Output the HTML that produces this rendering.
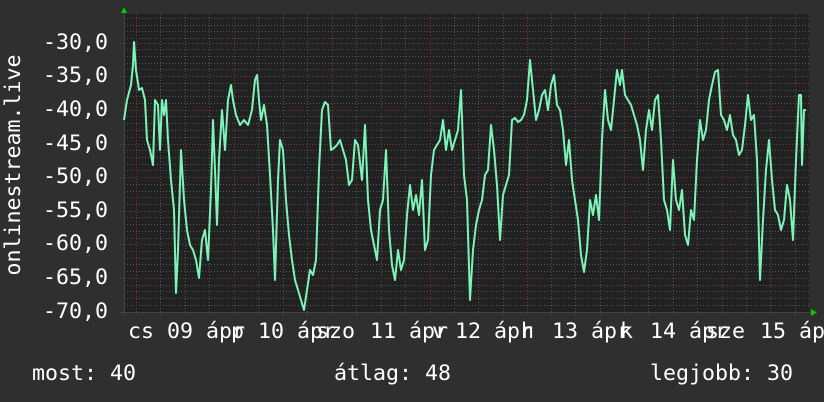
<!DOCTYPE html>
<html><head><meta charset="utf-8"><style>
html,body{margin:0;padding:0;background:#2f2f2f;width:824px;height:402px;overflow:hidden}
.t{position:absolute;color:#fff;font-family:"DejaVu Sans Mono","Liberation Mono",monospace;font-size:21.6px;line-height:1;white-space:pre}
.y{right:716px;text-align:right}
</style></head><body>
<svg width="824" height="402" style="position:absolute;left:0;top:0">
<rect x="124" y="14" width="685" height="298" fill="#212121"/>
<g stroke="#555" stroke-width="1" stroke-dasharray="1,2">
<line x1="124" x2="809" y1="18.5" y2="18.5"/><line x1="124" x2="809" y1="25.5" y2="25.5"/><line x1="124" x2="809" y1="31.5" y2="31.5"/><line x1="124" x2="809" y1="38.5" y2="38.5"/>
<line x1="124" x2="809" y1="49.5" y2="49.5"/><line x1="124" x2="809" y1="56.5" y2="56.5"/><line x1="124" x2="809" y1="63.5" y2="63.5"/><line x1="124" x2="809" y1="69.5" y2="69.5"/>
<line x1="124" x2="809" y1="83.5" y2="83.5"/><line x1="124" x2="809" y1="90.5" y2="90.5"/><line x1="124" x2="809" y1="96.5" y2="96.5"/><line x1="124" x2="809" y1="103.5" y2="103.5"/>
<line x1="124" x2="809" y1="116.5" y2="116.5"/><line x1="124" x2="809" y1="123.5" y2="123.5"/><line x1="124" x2="809" y1="130.5" y2="130.5"/><line x1="124" x2="809" y1="137.5" y2="137.5"/>
<line x1="124" x2="809" y1="150.5" y2="150.5"/><line x1="124" x2="809" y1="157.5" y2="157.5"/><line x1="124" x2="809" y1="164.5" y2="164.5"/><line x1="124" x2="809" y1="170.5" y2="170.5"/>
<line x1="124" x2="809" y1="184.5" y2="184.5"/><line x1="124" x2="809" y1="191.5" y2="191.5"/><line x1="124" x2="809" y1="197.5" y2="197.5"/><line x1="124" x2="809" y1="204.5" y2="204.5"/>
<line x1="124" x2="809" y1="217.5" y2="217.5"/><line x1="124" x2="809" y1="224.5" y2="224.5"/><line x1="124" x2="809" y1="231.5" y2="231.5"/><line x1="124" x2="809" y1="238.5" y2="238.5"/>
<line x1="124" x2="809" y1="251.5" y2="251.5"/><line x1="124" x2="809" y1="258.5" y2="258.5"/><line x1="124" x2="809" y1="264.5" y2="264.5"/><line x1="124" x2="809" y1="271.5" y2="271.5"/>
<line x1="124" x2="809" y1="285.5" y2="285.5"/><line x1="124" x2="809" y1="291.5" y2="291.5"/><line x1="124" x2="809" y1="298.5" y2="298.5"/><line x1="124" x2="809" y1="305.5" y2="305.5"/>
<line y1="14" y2="315" x1="160.5" x2="160.5"/><line y1="14" y2="315" x1="185.5" x2="185.5"/><line y1="14" y2="315" x1="209.5" x2="209.5"/>
<line y1="14" y2="315" x1="258.5" x2="258.5"/><line y1="14" y2="315" x1="283.5" x2="283.5"/><line y1="14" y2="315" x1="307.5" x2="307.5"/>
<line y1="14" y2="315" x1="356.5" x2="356.5"/><line y1="14" y2="315" x1="381.5" x2="381.5"/><line y1="14" y2="315" x1="405.5" x2="405.5"/>
<line y1="14" y2="315" x1="454.5" x2="454.5"/><line y1="14" y2="315" x1="478.5" x2="478.5"/><line y1="14" y2="315" x1="503.5" x2="503.5"/>
<line y1="14" y2="315" x1="551.5" x2="551.5"/><line y1="14" y2="315" x1="575.5" x2="575.5"/><line y1="14" y2="315" x1="600.5" x2="600.5"/>
<line y1="14" y2="315" x1="648.5" x2="648.5"/><line y1="14" y2="315" x1="673.5" x2="673.5"/><line y1="14" y2="315" x1="697.5" x2="697.5"/>
<line y1="14" y2="315" x1="746.5" x2="746.5"/><line y1="14" y2="315" x1="770.5" x2="770.5"/><line y1="14" y2="315" x1="795.5" x2="795.5"/>
</g>
<g stroke="#7a3a3a" stroke-width="1" stroke-dasharray="1,2">
<line x1="120" x2="809" y1="43.5" y2="43.5"/><line x1="120" x2="809" y1="76.5" y2="76.5"/><line x1="120" x2="809" y1="110.5" y2="110.5"/><line x1="120" x2="809" y1="144.5" y2="144.5"/>
<line x1="120" x2="809" y1="177.5" y2="177.5"/><line x1="120" x2="809" y1="211.5" y2="211.5"/><line x1="120" x2="809" y1="244.5" y2="244.5"/><line x1="120" x2="809" y1="278.5" y2="278.5"/><line x1="120" x2="809" y1="312.5" y2="312.5"/>
<line y1="14" y2="316" x1="136.5" x2="136.5"/><line y1="14" y2="316" x1="234.5" x2="234.5"/><line y1="14" y2="316" x1="332.5" x2="332.5"/><line y1="14" y2="316" x1="430.5" x2="430.5"/>
<line y1="14" y2="316" x1="527.5" x2="527.5"/><line y1="14" y2="316" x1="624.5" x2="624.5"/><line y1="14" y2="316" x1="722.5" x2="722.5"/>
</g>
<line x1="124.5" y1="10" x2="124.5" y2="316" stroke="#444"/>
<line x1="120" y1="312.5" x2="812" y2="312.5" stroke="#444"/>
<polygon points="121,13 127,13 124,7" fill="#0c0"/>
<polygon points="811,309 811,316 817,312.5" fill="#0c0"/>
<polyline fill="none" stroke="#7ef5b8" stroke-width="2" stroke-linejoin="round" points="124,120 127,100 131,85 133,65 134,42 136,70 139,90 142,88 145,100 147,140 150,150 153,165 155,100 158,105 160,150 162,100 164,115 166,100 168,140 171,180 174,210 176,293 178,250 181,150 184,200 187,230 190,245 193,250 196,260 199,278 202,240 205,230 208,260 211,190 213,120 215,170 217,225 219,160 222,110 225,150 228,100 231,85 233,100 236,115 240,125 244,120 248,125 252,110 255,80 257,75 259,100 261,120 264,105 267,125 270,175 273,230 275,280 278,180 280,140 283,150 286,200 289,235 292,260 295,280 298,290 301,300 304,310 307,290 310,270 313,275 316,260 319,170 322,110 325,102 328,105 331,150 334,148 337,145 340,140 343,150 346,160 349,185 352,180 355,140 358,145 362,180 365,125 368,200 371,230 374,245 377,260 380,210 383,200 386,150 389,230 392,265 395,280 398,250 401,270 404,260 407,215 410,185 413,210 416,195 419,215 422,180 425,250 428,240 431,175 434,150 437,145 440,140 443,120 446,150 449,130 452,150 455,140 458,130 461,90 464,175 467,200 470,300 473,250 476,225 479,210 482,200 485,175 488,170 491,125 494,150 497,185 500,240 503,195 506,185 509,175 512,120 515,118 518,122 521,120 524,115 527,100 530,60 533,90 536,120 539,110 542,95 545,90 548,110 551,85 554,75 557,105 560,110 563,130 566,165 569,140 572,180 575,200 578,220 581,255 584,272 587,250 590,200 593,215 596,195 599,220 602,140 605,90 608,120 611,130 614,100 617,70 620,85 622,70 625,95 628,100 631,105 634,115 637,125 640,140 643,170 646,130 649,110 652,130 655,100 658,95 661,140 664,200 667,210 670,230 673,160 676,200 679,210 682,190 685,235 688,245 691,210 694,220 697,160 700,120 703,140 706,130 709,100 712,85 715,72 718,70 721,115 724,120 727,130 730,115 733,135 736,140 739,155 742,150 745,125 748,95 751,120 754,115 757,160 760,280 763,220 766,170 769,140 772,180 775,210 778,215 781,230 784,220 787,185 790,200 793,240 796,160 799,95 801,95 802,165 804,110 806,110"/>
<text x="20" y="165" transform="rotate(-90 20 165)" text-anchor="middle" fill="#fff" font-family="DejaVu Sans Mono, Liberation Mono, monospace" font-size="21.6">onlinestream.live</text>
</svg>
<div class="t y" style="top:32px">-30,0</div>
<div class="t y" style="top:65px">-35,0</div>
<div class="t y" style="top:99px">-40,0</div>
<div class="t y" style="top:133px">-45,0</div>
<div class="t y" style="top:166px">-50,0</div>
<div class="t y" style="top:200px">-55,0</div>
<div class="t y" style="top:233px">-60,0</div>
<div class="t y" style="top:267px">-65,0</div>
<div class="t y" style="top:301px">-70,0</div>
<div class="t" style="left:167px;top:321px">09 ápr</div>
<div class="t" style="left:258px;top:321px">10 ápr</div>
<div class="t" style="left:370px;top:321px">11 ápr</div>
<div class="t" style="left:455px;top:321px">12 ápr</div>
<div class="t" style="left:552px;top:321px">13 ápr</div>
<div class="t" style="left:650px;top:321px">14 ápr</div>
<div class="t" style="left:760px;top:321px">15 ápr</div>
<div class="t" style="left:128px;top:321px">cs</div>
<div class="t" style="left:231px;top:321px">p</div>
<div class="t" style="left:316px;top:321px">szo</div>
<div class="t" style="left:432px;top:321px">v</div>
<div class="t" style="left:521px;top:321px">h</div>
<div class="t" style="left:620px;top:321px">k</div>
<div class="t" style="left:706px;top:321px">sze</div>
<div class="t" style="left:32px;top:363px">most: 40</div>
<div class="t" style="left:334px;top:363px">átlag: 48</div>
<div class="t" style="left:650px;top:363px">legjobb: 30</div>
</body></html>
